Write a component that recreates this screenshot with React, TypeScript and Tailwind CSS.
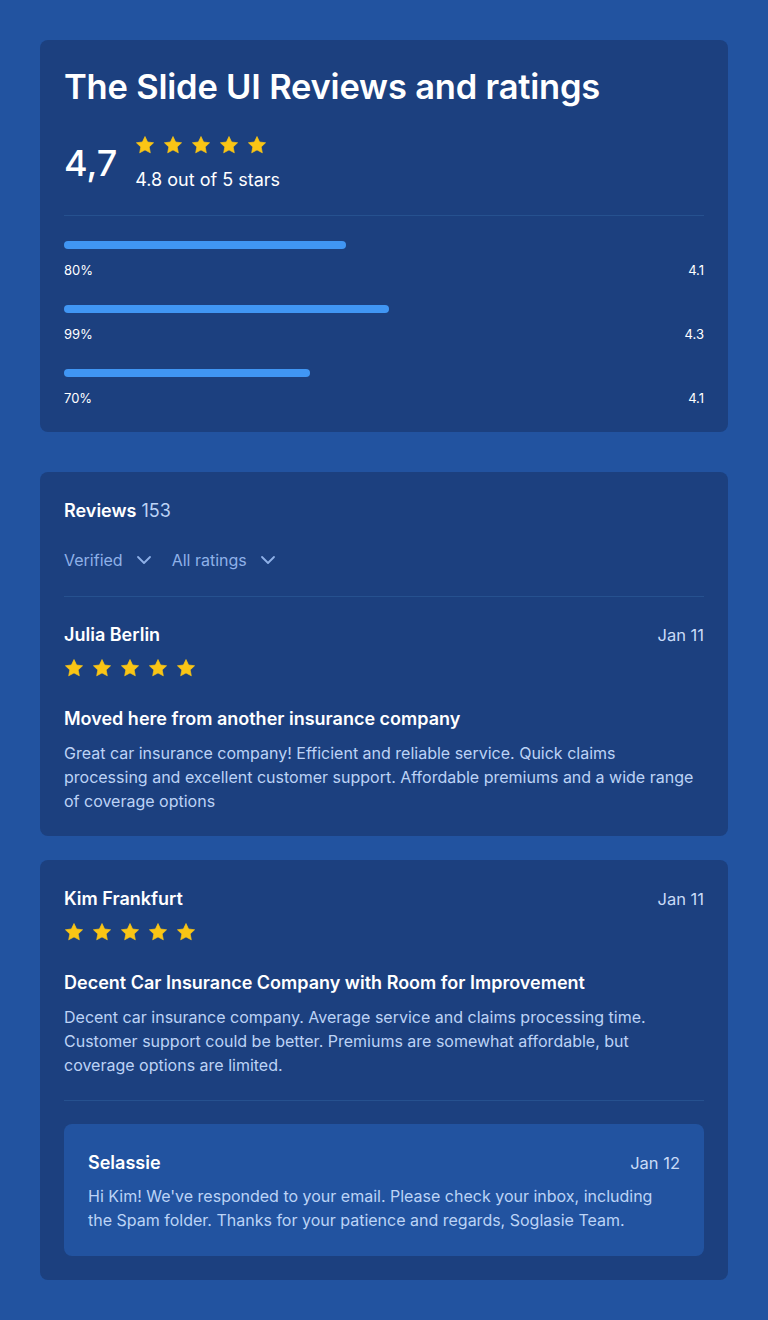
import { ChevronDown } from "lucide-react";

interface Review {
  name: string;
  date: string;
  title: string;
  body: string;
  reply?: { name: string; date: string; body: string };
}

const bars = [
  { label: "80%", value: "4.1", width: 282 },
  { label: "99%", value: "4.3", width: 325 },
  { label: "70%", value: "4.1", width: 246 },
];

const reviews: Review[] = [
  {
    name: "Julia Berlin",
    date: "Jan 11",
    title: "Moved here from another insurance company",
    body: "Great car insurance company! Efficient and reliable service. Quick claims processing and excellent customer support. Affordable premiums and a wide range of coverage options",
  },
  {
    name: "Kim Frankfurt",
    date: "Jan 11",
    title: "Decent Car Insurance Company with Room for Improvement",
    body: "Decent car insurance company. Average service and claims processing time. Customer support could be better. Premiums are somewhat affordable, but coverage options are limited.",
    reply: {
      name: "Selassie",
      date: "Jan 12",
      body: "Hi Kim! We've responded to your email. Please check your inbox, including the Spam folder. Thanks for your patience and regards, Soglasie Team.",
    },
  },
];

function Star({ size }: { size: number }) {
  return (
    <svg width={size} height={size} viewBox="0 0 24 24" className="shrink-0">
      <path
        d="M12 1.8l3.1 6.6 7.2.9-5.3 5 1.4 7.1L12 17.9l-6.4 3.5 1.4-7.1-5.3-5 7.2-.9z"
        fill="#fac515"
        strokeLinejoin="round"
        stroke="#fac515"
        strokeWidth="0.8"
      />
    </svg>
  );
}

function Stars() {
  return (
    <div className="flex gap-2">
      {[0, 1, 2, 3, 4].map((i) => (
        <Star key={i} size={20} />
      ))}
    </div>
  );
}

function ReviewBody({ review }: { review: Review }) {
  return (
    <div>
      <div className="flex items-center justify-between h-6">
        <span className="text-lg font-semibold text-white">{review.name}</span>
        <span className="text-[16.5px] text-[#c9dbf7]">{review.date}</span>
      </div>
      <div className="mt-[11px]">
        <Stars />
      </div>
      <div className="mt-[29px] text-lg font-semibold text-white leading-6">{review.title}</div>
      <p className="mt-[10px] pr-1 text-base leading-6 text-[#bcd3f6]">{review.body}</p>
    </div>
  );
}

export default function App() {
  return (
    <div
      className="min-h-[1320px] bg-[#2253a0] px-10 pt-10 pb-10"
      style={{ fontFamily: "Inter, 'Noto Sans', sans-serif" }}
    >
      {/* Summary */}
      <div className="rounded-lg bg-[#1c407f] px-6 pt-[26px] pb-[26px]">
        <h1 className="text-[34.5px] font-semibold leading-[42px] text-white tracking-[-0.2px]">
          The Slide UI Reviews and ratings
        </h1>
        <div className="mt-[27px] flex items-center gap-[18px]">
          <span className="text-[36px] font-medium text-white leading-none">4,7</span>
          <div className="flex flex-col gap-[15px]">
            <Stars />
            <span className="text-lg text-white leading-5">4.8 out of 5 stars</span>
          </div>
        </div>
        <div className="mt-[25px] border-t border-[#26518f]" />
        <div className="mt-[25px] flex flex-col gap-[27px]">
          {bars.map((b, i) => (
            <div key={i}>
              <div className="h-2 rounded-full bg-[#4096f4]" style={{ width: b.width }} />
              <div className="mt-[13px] flex justify-between text-[13px] leading-4 text-white">
                <span>{b.label}</span>
                <span>{b.value}</span>
              </div>
            </div>
          ))}
        </div>
      </div>

      {/* Reviews list */}
      <div className="mt-10 rounded-lg bg-[#1c407f] px-6 pt-[27px] pb-[23px]">
        <div className="text-lg leading-6 text-white">
          <span className="font-semibold">Reviews</span>{" "}
          <span className="text-[#bcd3f6]">153</span>
        </div>
        <div className="mt-[25px] flex items-center gap-4 text-base text-[#8fb1e8]">
          <button className="flex items-center gap-[9px]">
            Verified <ChevronDown size={24} strokeWidth={1.8} />
          </button>
          <button className="flex items-center gap-[9px]">
            All ratings <ChevronDown size={24} strokeWidth={1.8} />
          </button>
        </div>
        <div className="mt-6 border-t border-[#26518f]" />
        <div className="mt-[26px]">
          <ReviewBody review={reviews[0]} />
        </div>
      </div>

      <div className="mt-6 rounded-lg bg-[#1c407f] px-6 pt-[27px] pb-6">
        <ReviewBody review={reviews[1]} />
        <div className="mt-[23px] border-t border-[#26518f]" />
        <div className="mt-[23px] rounded-lg bg-[#2253a0] px-6 pt-[27px] pb-6">
          <div className="flex items-center justify-between h-6">
            <span className="text-lg font-semibold text-white">{reviews[1].reply!.name}</span>
            <span className="text-[16.5px] text-[#c9dbf7]">{reviews[1].reply!.date}</span>
          </div>
          <p className="mt-[9px] text-base leading-6 text-[#bcd3f6]">{reviews[1].reply!.body}</p>
        </div>
      </div>
    </div>
  );
}
